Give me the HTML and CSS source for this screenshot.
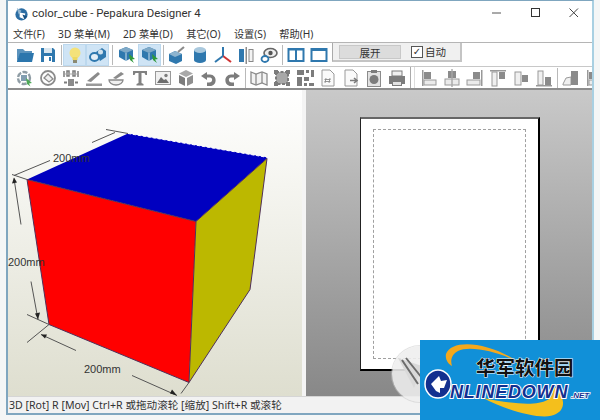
FILE: index.html
```html
<!DOCTYPE html>
<html lang="zh">
<head>
<meta charset="utf-8">
<title>color_cube - Pepakura Designer 4</title>
<link rel="stylesheet" href="styles.css">
</head>
<body>
<svg class="defs" width="0" height="0" aria-hidden="true">
  <symbol id="i-folder" viewBox="0 0 18 18"><path d="M1 3h6l2 2h7v2H5L1 15z" fill="#5b93bd"/><path d="M1 15l3-8h14l-2 9H1z" fill="#2c76ad"/></symbol>
  <symbol id="i-save" viewBox="0 0 18 18"><path d="M2 2h12l2 2v12H2z" fill="#2f78ae"/><rect x="5" y="2" width="8" height="5" fill="#d9e6ef"/><rect x="5" y="10" width="8" height="6" fill="#fff"/><rect x="10" y="11" width="2" height="4" fill="#2f78ae"/></symbol>
  <symbol id="i-bulb" viewBox="0 0 18 18"><circle cx="9" cy="7" r="5.5" fill="#f4e27a"/><path d="M6.5 11h5v3h-5z" fill="#ecd860"/><rect x="7" y="14" width="4" height="3" fill="#8b8a72"/></symbol>
  <symbol id="i-link" viewBox="0 0 18 18"><path d="M7 6l6-4 4 3v6l-6 4z" fill="#2f78ae"/><ellipse cx="5.5" cy="11" rx="4.5" ry="4" fill="#e4eef6" stroke="#2f78ae" stroke-width="2"/><ellipse cx="11.5" cy="6" rx="2.5" ry="2.5" fill="#cfe0ec"/></symbol>
  <symbol id="i-cubecur" viewBox="0 0 18 18"><path d="M8 1l7 3v7l-7 4-7-4V4z" fill="#2f78ae"/><path d="M1 4l7 3 7-3-7-3z" fill="#7fa9c7"/><path d="M8 7v8" stroke="#cfe0ec"/><path d="M11 8l6 5-3 .5 2 3.5-4-3z" fill="#2f9a3a"/></symbol>
  <symbol id="i-brush" viewBox="0 0 18 18"><path d="M1 8l6-3 7 3v7l-6 3-7-3z" fill="#2f78ae"/><path d="M1 8l6 3 7-3-7-3z" fill="#8db4cf"/><path d="M10 6l6-5" stroke="#8b8b8b" stroke-width="2.2"/></symbol>
  <symbol id="i-cyl" viewBox="0 0 18 18"><path d="M3 4h12v10a6 3 0 0 1-12 0z" fill="#2f78ae"/><ellipse cx="9" cy="4" rx="6" ry="3" fill="#a9c8dd"/></symbol>
  <symbol id="i-axes" viewBox="0 0 18 18"><path d="M9 10V1" stroke="#2f78ae" stroke-width="2"/><path d="M9 10l8 6" stroke="#cf3333" stroke-width="2"/><path d="M9 10l-8 6" stroke="#2f78ae" stroke-width="2"/></symbol>
  <symbol id="i-bars" viewBox="0 0 18 18"><rect x="2" y="3" width="5" height="13" fill="#2f78ae"/><rect x="8.5" y="1" width="1.5" height="17" fill="#8b8b8b"/><rect x="12" y="3.500" width="4" height="12" fill="#f3f3f3" stroke="#888"/></symbol>
  <symbol id="i-eye" viewBox="0 0 18 18"><ellipse cx="10.500" cy="7" rx="6.500" ry="4.500" fill="#eee" stroke="#666" stroke-width="1.600"/><circle cx="10.500" cy="7" r="2.200" fill="#555"/><ellipse cx="5" cy="13" rx="3.500" ry="3" fill="#fff" stroke="#2f78ae" stroke-width="1.800"/></symbol>
  <symbol id="i-split" viewBox="0 0 18 18"><rect x="1.500" y="3" width="15" height="12" fill="#fff" stroke="#2f78ae" stroke-width="2"/><rect x="8" y="3" width="2" height="12" fill="#2f78ae"/><rect x="1" y="2" width="16" height="2.500" fill="#2f78ae"/></symbol>
  <symbol id="i-win" viewBox="0 0 18 18"><rect x="1.500" y="3" width="15" height="12" fill="#fff" stroke="#2f78ae" stroke-width="2"/><rect x="1" y="2" width="16" height="3" fill="#2f78ae"/></symbol>
  <symbol id="i-rotcur" viewBox="0 0 18 18"><circle cx="8" cy="9" r="6" fill="none" stroke="#7d8d96" stroke-width="2.400" stroke-dasharray="5 1.500"/><rect x="5" y="6" width="6" height="6" fill="#6d8ea4"/><path d="M10 9l6 5-3 .5 1.500 3-3.500-2.500z" fill="#2f9a3a"/></symbol>
  <symbol id="i-rot2" viewBox="0 0 18 18"><circle cx="9" cy="9" r="7" fill="none" stroke="#777" stroke-width="1.800"/><path d="M5 9l4-4 5 5-4 3z" fill="#eee" stroke="#777" stroke-width="1.300"/></symbol>
  <symbol id="i-dims" viewBox="0 0 18 18"><path d="M2 2v6M16 2v6M5 2v5h2V2zM11 2v5h2V2z" fill="none" stroke="#666" stroke-width="1.500"/><path d="M3 5h12" stroke="#999"/><path d="M6 10h6v7H6z" fill="#777"/><path d="M2 13.500h3M13 13.500h3" stroke="#666" stroke-width="2"/></symbol>
  <symbol id="i-pen" viewBox="0 0 18 18"><path d="M2 12L13 3l2 2L6 13z" fill="#777"/><rect x="1" y="14.500" width="16" height="2.500" fill="#888"/></symbol>
  <symbol id="i-pen2" viewBox="0 0 18 18"><path d="M5 9l8-6 3 2-8 5z" fill="#777"/><path d="M1 11h14a7 5 0 0 1-14 0z" fill="#eee" stroke="#777" stroke-width="1.300"/></symbol>
  <symbol id="i-t" viewBox="0 0 18 18"><path d="M2 2h14v4h-1.500l-1-2H10.500v10l2 1v1.500h-7V15l2-1V4H4.500l-1 2H2z" fill="#6c6c6c"/></symbol>
  <symbol id="i-img" viewBox="0 0 18 18"><rect x="1.500" y="2.500" width="15" height="13" fill="#eee" stroke="#888"/><circle cx="12" cy="6.500" r="1.700" fill="#666"/><path d="M3 14l4-6 3 3 2-1 3 4z" fill="#555"/></symbol>
  <symbol id="i-box" viewBox="0 0 18 18"><path d="M9 1l7 3.500-7 3.500-7-3.500z" fill="#999"/><path d="M2 6l6 3v8l-6-3z" fill="#666"/><path d="M16 6l-6 3v8l6-3z" fill="#7c7c7c"/></symbol>
  <symbol id="i-undo" viewBox="0 0 18 18"><path d="M7 3L1 7l6 4V8.500h3c3 0 3 5-1 5H7V17h3c7 0 8-11 0-11.500H7z" fill="#666"/></symbol>
  <symbol id="i-redo" viewBox="0 0 18 18"><path d="M11 3l6 4-6 4V8.500H8c-3 0-3 5 1 5h2V17H8C1 17 0 6 8 5.500h3z" fill="#666"/></symbol>
  <symbol id="i-map" viewBox="0 0 18 18"><path d="M1 3l5 2 6-2 5 2v11l-5-2-6 2-5-2z" fill="#f2f2f2" stroke="#777" stroke-width="1.300"/><path d="M6 5v11M12 3v11" stroke="#777" stroke-width="1.300"/></symbol>
  <symbol id="i-frame" viewBox="0 0 18 18"><rect x="3" y="3" width="12" height="12" fill="#999" stroke="#666" stroke-width="2" stroke-dasharray="3 1.500"/><rect x="1" y="1" width="4" height="4" fill="#666"/><rect x="13" y="1" width="4" height="4" fill="#666"/><rect x="1" y="13" width="4" height="4" fill="#666"/><rect x="13" y="13" width="4" height="4" fill="#666"/></symbol>
  <symbol id="i-grid" viewBox="0 0 18 18"><path d="M1 1h7v5H1zM10 1h3v3h-3zM15 1h3v7h-3zM1 8h5v9H1zM8 8h5v4H8zM8 14h3v3H8zM13 14h5v3h-5z" fill="#666"/></symbol>
  <symbol id="i-docnum" viewBox="0 0 18 18"><path d="M3 1h8l4 4v12H3z" fill="#fafafa" stroke="#888"/><path d="M7 9l-1 5M11 9l-1 5M5.500 10.500h6M5.500 12.500h6" stroke="#777" stroke-width=".9"/></symbol>
  <symbol id="i-docout" viewBox="0 0 18 18"><path d="M3 1h8l4 4v12H3z" fill="#fafafa" stroke="#888"/><path d="M8 11.500h6M12 9l3 2.500-3 2.500" fill="none" stroke="#666" stroke-width="1.600"/></symbol>
  <symbol id="i-clip" viewBox="0 0 18 18"><rect x="2.500" y="2.500" width="13" height="15" fill="#ddd" stroke="#777"/><rect x="6" y="1" width="6" height="3" fill="#666"/><circle cx="9" cy="10.500" r="4.500" fill="#666"/></symbol>
  <symbol id="i-print" viewBox="0 0 18 18"><rect x="4" y="2" width="10" height="5" fill="#eee" stroke="#666"/><path d="M1 7h16v8h-3v-3H4v3H1z" fill="#666"/><rect x="4.500" y="12.500" width="9" height="4" fill="#ddd" stroke="#666"/></symbol>
  <symbol id="i-al1" viewBox="0 0 18 18"><rect x="2" y="1" width="1.500" height="16" fill="#888"/><rect x="4" y="3" width="7" height="7" fill="#777"/><rect x="4" y="11" width="12" height="5" fill="#e8e8e8" stroke="#888"/></symbol>
  <symbol id="i-al2" viewBox="0 0 18 18"><rect x="5" y="2" width="8" height="7" fill="#777"/><rect x="2" y="10" width="14" height="6" fill="#e8e8e8" stroke="#888"/><rect x="8.300" y="0" width="1.400" height="18" fill="#999"/></symbol>
  <symbol id="i-al3" viewBox="0 0 18 18"><rect x="15" y="1" width="1.500" height="16" fill="#888"/><rect x="7" y="3" width="7" height="7" fill="#777"/><rect x="1" y="11" width="13" height="5" fill="#e8e8e8" stroke="#888"/></symbol>
  <symbol id="i-al4" viewBox="0 0 18 18"><rect x="1" y="1" width="16" height="1.500" fill="#888"/><rect x="3" y="3" width="5" height="14" fill="#eee" stroke="#888"/><rect x="10" y="3" width="6" height="7" fill="#777"/></symbol>
  <symbol id="i-al5" viewBox="0 0 18 18"><rect x="3" y="3" width="6" height="13" fill="#eee" stroke="#888"/><rect x="10" y="6" width="6" height="7" fill="#777"/></symbol>
  <symbol id="i-al6" viewBox="0 0 18 18"><rect x="1" y="16" width="16" height="1.500" fill="#888"/><rect x="3" y="2" width="5" height="14" fill="#eee" stroke="#888"/><rect x="10" y="8" width="6" height="8" fill="#777"/></symbol>
  <symbol id="i-al7" viewBox="0 0 18 18"><path d="M1 15l3-6 5-1v8H1z" fill="#eee" stroke="#888"/><rect x="9" y="2" width="7" height="14" fill="#777"/></symbol>
</svg>

<div class="window">
  <header class="titlebar">
    <svg class="app-icon" viewBox="0 0 16 16"><circle cx="8" cy="9" r="6.500" fill="#2c6da3"/><path d="M3 2l5 3-3 4z" fill="#8fb4cf"/><path d="M6 7l6 1-1 6-5-2z" fill="#fff"/><path d="M9 9l5 2-3 3z" fill="#174f80"/></svg>
    <span class="title-text">color_cube - Pepakura Designer 4</span>
    <div class="win-controls">
      <svg class="ctl" viewBox="0 0 10 10"><path d="M0 5h9" stroke="#555"/></svg>
      <svg class="ctl" viewBox="0 0 10 10"><rect x=".5" y=".5" width="8" height="8" fill="none" stroke="#333"/></svg>
      <svg class="ctl" viewBox="0 0 10 10"><path d="M.5.5l8.500 8.500M9 .5L.5 9" stroke="#444"/></svg>
    </div>
  </header>

  <nav class="menubar">
    <span>文件(F)</span><span>3D 菜单(M)</span><span>2D 菜单(D)</span><span>其它(O)</span><span>设置(S)</span><span>帮助(H)</span>
  </nav>

  <div class="toolbar row1">
    <i class="btn"><svg><use href="#i-folder"/></svg></i>
    <i class="btn"><svg><use href="#i-save"/></svg></i>
    <b class="sep"></b>
    <i class="btn on"><svg><use href="#i-bulb"/></svg></i>
    <i class="btn on"><svg><use href="#i-link"/></svg></i>
    <b class="sep wide"></b>
    <i class="btn"><svg><use href="#i-cubecur"/></svg></i>
    <i class="btn on"><svg><use href="#i-cubecur"/></svg></i>
    <b class="sep"></b>
    <i class="btn"><svg><use href="#i-brush"/></svg></i>
    <i class="btn"><svg><use href="#i-cyl"/></svg></i>
    <i class="btn"><svg><use href="#i-axes"/></svg></i>
    <i class="btn"><svg><use href="#i-bars"/></svg></i>
    <i class="btn"><svg><use href="#i-eye"/></svg></i>
    <b class="sep"></b>
    <i class="btn"><svg><use href="#i-split"/></svg></i>
    <i class="btn"><svg><use href="#i-win"/></svg></i>
    <div class="unfold">
      <button class="unfold-btn">展开</button>
      <label class="auto"><span class="check">✓</span>自动</label>
    </div>
  </div>

  <div class="toolbar row2">
    <i class="btn"><svg><use href="#i-rotcur"/></svg></i>
    <i class="btn"><svg><use href="#i-rot2"/></svg></i>
    <i class="btn"><svg><use href="#i-dims"/></svg></i>
    <i class="btn"><svg><use href="#i-pen"/></svg></i>
    <i class="btn"><svg><use href="#i-pen2"/></svg></i>
    <i class="btn"><svg><use href="#i-t"/></svg></i>
    <i class="btn"><svg><use href="#i-img"/></svg></i>
    <i class="btn"><svg><use href="#i-box"/></svg></i>
    <i class="btn"><svg><use href="#i-undo"/></svg></i>
    <i class="btn"><svg><use href="#i-redo"/></svg></i>
    <b class="sep"></b>
    <i class="btn"><svg><use href="#i-map"/></svg></i>
    <i class="btn"><svg><use href="#i-frame"/></svg></i>
    <i class="btn"><svg><use href="#i-grid"/></svg></i>
    <i class="btn"><svg><use href="#i-docnum"/></svg></i>
    <i class="btn"><svg><use href="#i-docout"/></svg></i>
    <i class="btn"><svg><use href="#i-clip"/></svg></i>
    <i class="btn"><svg><use href="#i-print"/></svg></i>
    <b class="sep grip"></b>
    <i class="btn"><svg><use href="#i-al1"/></svg></i>
    <i class="btn"><svg><use href="#i-al2"/></svg></i>
    <i class="btn"><svg><use href="#i-al3"/></svg></i>
    <i class="btn"><svg><use href="#i-al4"/></svg></i>
    <i class="btn"><svg><use href="#i-al5"/></svg></i>
    <i class="btn"><svg><use href="#i-al6"/></svg></i>
    <b class="sep"></b>
    <i class="btn"><svg><use href="#i-al7"/></svg></i>
    <i class="btn"><svg><use href="#i-al1"/></svg></i>
  </div>

  <main class="panes">
    <section class="pane-3d">
      <svg class="scene" viewBox="8 91 294 305">
        <polygon points="27,180 128,134 268,158 196,222" fill="#0000c0"/>
        <polygon points="27,180 196,222 189,383 49,325" fill="#ff0000"/>
        <polygon points="196,222 267,159 254,260 250,290 189,383" fill="#bcb800"/>
        <g fill="none" stroke="#50305a" stroke-width="1">
          <path d="M27 180L196 222L189 383L49 325Z"/>
          <path d="M196 222L267 159L254 260L250 290L189 383"/>
        </g>
        <path d="M128 134L268 158" stroke="#fff" stroke-dasharray="3 2" fill="none"/>
        <g fill="none" stroke="#555" stroke-width="1">
          <path d="M106 130L128 134M92 143L115 133M12 175L27 180M14 176L50 161"/>
          <path d="M21 225L14 179M31 282L38 320M27 315L49 325M27 343L49 325M41 335L76 351M132 376L177 396M181 394L189 383"/>
        </g>
        <g fill="#222">
          <path d="M14 178L12 184L17 183Z"/>
          <path d="M38 320L35 314L40 313Z"/>
          <path d="M41 335L47 335L45 339Z"/>
          <path d="M177 396L170 394L172 390Z"/>
        </g>
        <text class="dim" x="53" y="162">200mm</text>
        <text class="dim" x="8" y="266">200mm</text>
        <text class="dim" x="84" y="373">200mm</text>
      </svg>
    </section>
    <section class="pane-2d">
      <div class="paper"><div class="margin-box"></div></div>
    </section>
  </main>

  <footer class="statusbar">3D [Rot] R [Mov] Ctrl+R 或拖动滚轮 [缩放] Shift+R 或滚轮</footer>
</div>

<div class="glass">
  <svg class="glass-art" viewBox="0 0 56 56"><path d="M6 12L30 20L22 42Z" fill="#d9d9d9"/><path d="M10 14L26 38M14 12L30 32" stroke="#6d6d6d" stroke-width="2" fill="none"/></svg>
</div>
<div class="badge">
  <svg class="badge-art" viewBox="420 340 180 80">
    <path d="M446 354C452 338 490 342 520 363C500 352 470 345 458 351C452 354 450 360 452 366C448 364 445 359 446 354Z" fill="#f4a81c"/>
    <path d="M483 398C510 412 545 421 556 414C566 410 566 395 552 385C558 402 540 410 483 398Z" fill="#f4bf1c"/>
    <ellipse cx="438" cy="384" rx="13" ry="14" fill="#13308f" stroke="#fff" stroke-width="1.500"/>
    <path d="M431 384l8-8 2 5 6-1-3 8-4 0 0 5-4-2z" fill="#fff"/>
    <text class="cn" x="476" y="375">华军软件园</text>
    <text class="en" x="450" y="398">NLINEDOWN</text>
    <text class="net" x="571" y="398">.NET</text>
  </svg>
</div>
</body>
</html>
```
FILE: styles.css
```css
* { box-sizing: border-box; }
html, body { margin: 0; height: 420px; overflow: hidden; }
body {
  width: 600px;
  background: #f4f6f6;
  position: relative;
  font-family: "Noto Sans", "Noto Sans CJK SC", sans-serif;
  color: #222;
}
.defs { position: absolute; }

.window {
  width: 588px;
  height: 415px;
  margin-left: 6px;
  background: #fff;
  border: 2px solid #7fa6bf;
  border-top-width: 1px;
  border-right-color: #a9d0e2;
  display: flex;
  flex-direction: column;
  overflow: hidden;
}

.titlebar {
  height: 24px;
  display: flex;
  align-items: center;
  padding-left: 6px;
  flex: none;
}
.app-icon { width: 15px; height: 15px; flex: none; }
.title-text { margin-left: 3px; font: 11.4px Roboto, sans-serif; color: #333; }
.win-controls { margin-left: auto; display: flex; align-items: center; padding-right: 13px; gap: 28.5px; }
.ctl { width: 10px; height: 10px; display: block; }

.menubar {
  height: 18px;
  flex: none;
  display: flex;
  align-items: center;
  gap: 13.3px;
  padding-left: 5px;
  font-size: 10.2px;
  color: #333;
  border-bottom: 1px solid #b5b5b5;
}

.toolbar { flex: none; display: flex; align-items: center; overflow: hidden; position: relative; }
.row1 { height: 23px; padding-left: 5px; }
.row2 { height: 24px; padding-left: 5px; border-top: 1px solid #c8c8c8; border-bottom: 2px solid #8d8d8d; }
.row2 .btn svg { opacity: .85; }

.btn { width: 23px; height: 22px; flex: none; display: flex; align-items: center; justify-content: center; }
.btn svg { width: 18px; height: 18px; display: block; filter: blur(.35px); }
.btn.on { background: #cfe4f5; box-shadow: inset 0 0 0 1px #bcd8ee; }
.sep { width: 3px; height: 20px; flex: none; margin: 0 .5px; background: linear-gradient(#b9b9b9, #b9b9b9) center / 1px 100% no-repeat; }
.sep.wide { width: 5px; }
.sep.grip { width: 8px; height: 22px; background: linear-gradient(to right, transparent 1px, #aaa 1px, #aaa 2px, transparent 2px, transparent 5px, #ddd 5px, #ddd 6px, transparent 6px); }

.unfold {
  align-self: flex-start;
  height: 19px;
  margin-left: 2px;
  width: 130px;
  display: flex;
  align-items: center;
  gap: 10px;
  padding-left: 6px;
  background: #f0f0f0;
  border-left: 1px solid #aaa;
  border-right: 2px solid #c4c4c4;
  border-bottom: 2px solid #c4c4c4;
}
.unfold-btn {
  width: 62px;
  height: 14px;
  padding: 0;
  font: 10.5px/13px "Noto Sans CJK SC", sans-serif;
  color: #333;
  background: #dcdcdc;
  border: 1px solid #c8c8c8;
}
.auto { display: flex; align-items: center; gap: 2px; font: 10.5px/14px "Noto Sans CJK SC", sans-serif; color: #333; }
.check { width: 12px; height: 12px; border: 1px solid #555; background: #fff; font: bold 10px/10px "DejaVu Sans", sans-serif; text-align: center; display: block; color: #333; }

.panes { flex: 1; min-height: 0; display: flex; gap: 4px; background: #f4f4f4; }
.pane-3d { width: 294px; flex: none; background: linear-gradient(#ffffff, #f7f7f3 25%, #dedecf); }
.scene { display: block; width: 294px; height: 100%; }
.dim { font: 11px "Liberation Sans", sans-serif; fill: #333; }
.pane-2d { flex: 1; padding: 27px 0 0 54px; background: linear-gradient(#c9c9c9, #888888); overflow: hidden; }
.paper {
  width: 180px;
  height: 254px;
  padding: 10px 12px;
  background: #fff;
  border-top: 2px solid #666;
  border-left: 1px solid #222;
  border-right: 2px solid #000;
  border-bottom: 2px solid #000;
}
.margin-box { width: 100%; height: 100%; border: 1px dashed #a0a0a0; }

.statusbar {
  height: 17px;
  flex: none;
  padding-left: 1px;
  background: #f2f2f2;
  border-top: 1px solid #d5d5d5;
  font-size: 10.6px;
  line-height: 16px;
  color: #333;
  white-space: nowrap;
}

.glass {
  position: absolute;
  left: 392px;
  top: 346px;
  width: 56px;
  height: 56px;
  border-radius: 50%;
  background: rgba(238,238,238,.88);
  box-shadow: 0 0 0 1px rgba(200,200,200,.5);
  overflow: hidden;
}
.glass-art { display: block; width: 56px; height: 56px; }
.badge { position: absolute; left: 420px; top: 340px; width: 180px; height: 80px; background: #1190d8; }
.badge-art { display: block; width: 180px; height: 80px; }
.cn { font: 700 19.500px "Noto Sans CJK SC", sans-serif; fill: #111; stroke: #fff; stroke-width: 1px; paint-order: stroke; }
.en { font: italic 700 18px "Liberation Sans", sans-serif; letter-spacing: .8px; fill: #13308f; stroke: #fff; stroke-width: 2px; paint-order: stroke; }
.net { font: italic 700 8px "Liberation Sans", sans-serif; fill: #13308f; stroke: #fff; stroke-width: 1.500px; paint-order: stroke; }
```
